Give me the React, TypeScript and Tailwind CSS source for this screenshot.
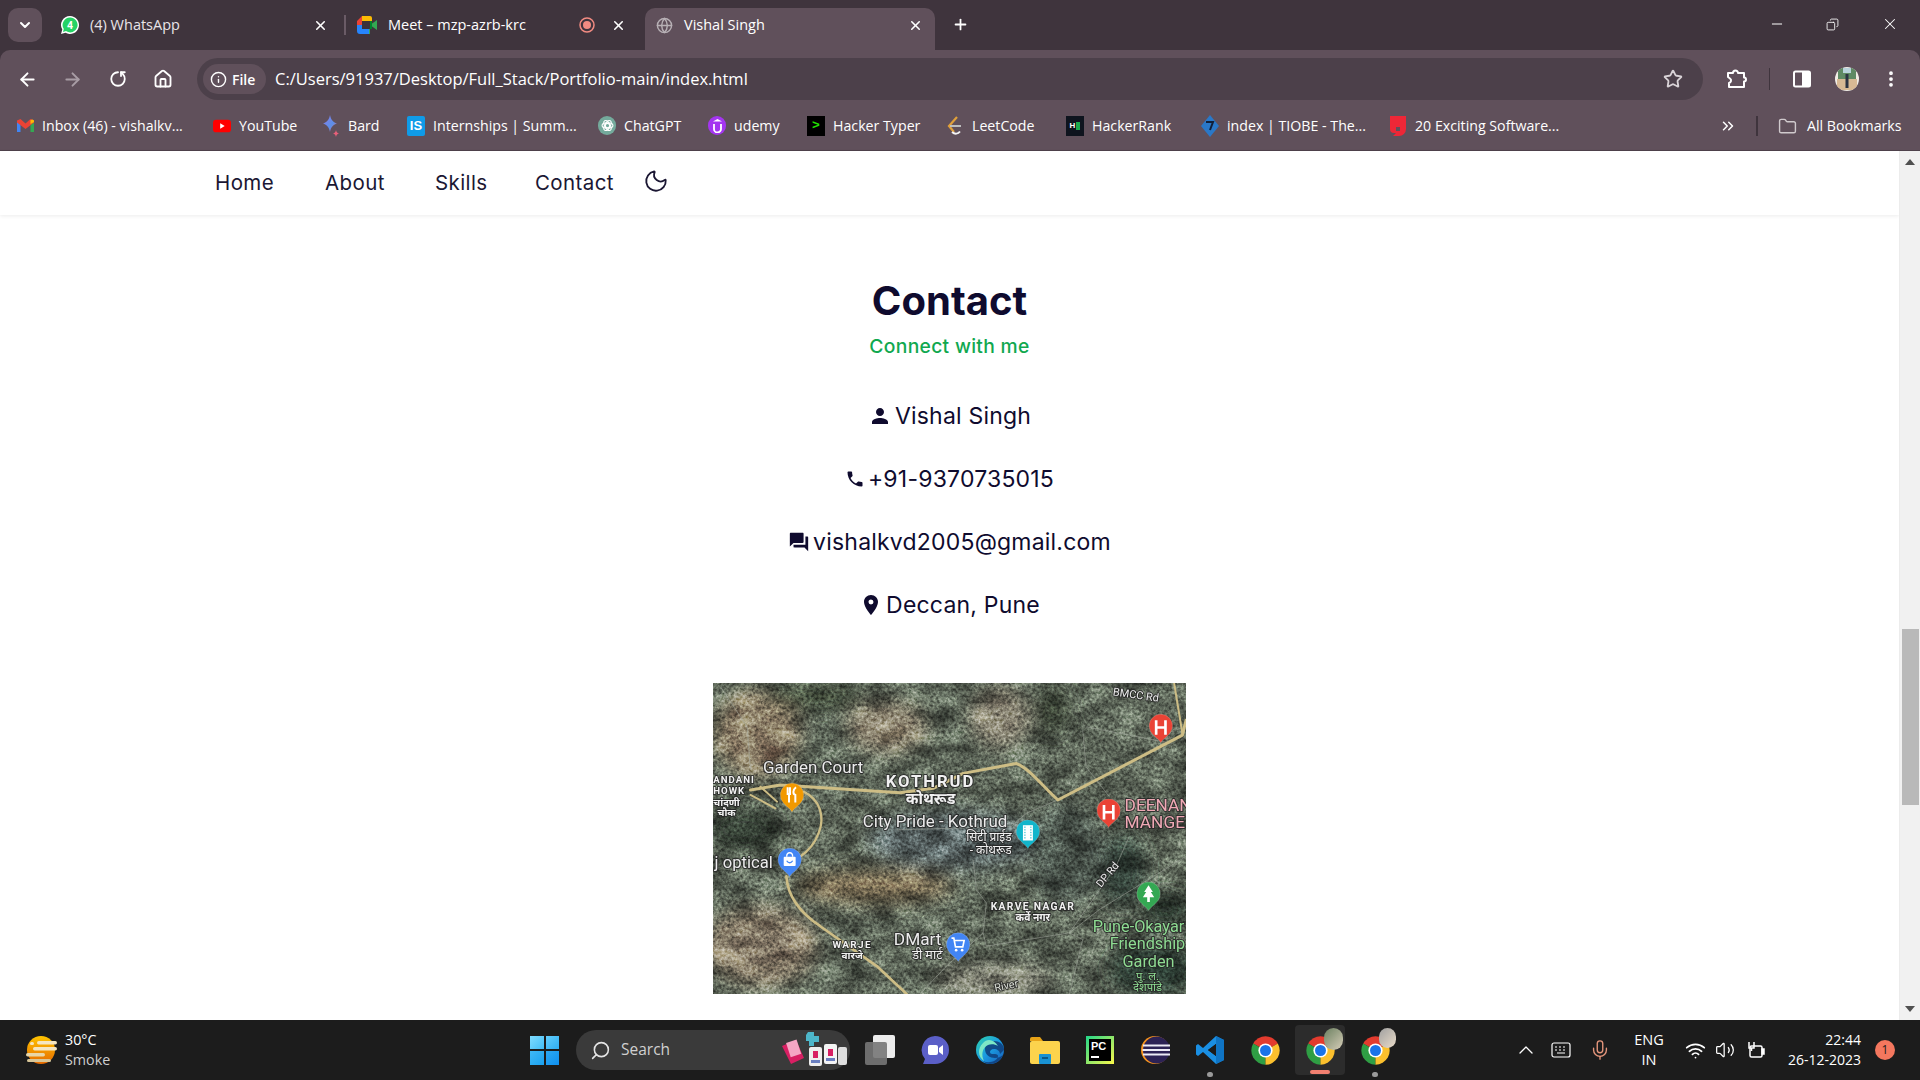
import React from "react";
import { ArrowLeft, ArrowRight, RotateCw, House, Star, EllipsisVertical, ChevronDown, X, Plus, Minus, Info, Moon, Search, Mic, ChevronUp, Wifi, Volume2, Folder, ChevronsRight, Globe, Copy } from "lucide-react";
import { MdPerson, MdPhone, MdForum, MdLocationOn } from "react-icons/md";

const Chrome = ({ size = 30 }: { size?: number }) => (
  <svg width={size} height={size} viewBox="0 0 48 48">
    <path d="M24 24L4.95 13A22 22 0 0 1 43.05 13Z" fill="#e33b2e" />
    <path d="M24 24L4.95 13A22 22 0 0 0 24 46Z" fill="#2f9e44" />
    <path d="M24 24L24 46A22 22 0 0 0 43.05 13Z" fill="#fbc02d" />
    <circle cx="24" cy="24" r="11" fill="#fff" />
    <circle cx="24" cy="24" r="8.5" fill="#1a73e8" />
  </svg>
);

const WhatsApp = () => (
  <svg width="20" height="20" viewBox="0 0 20 20">
    <path d="M10 1a9 9 0 0 0-7.7 13.6L1 19l4.5-1.2A9 9 0 1 0 10 1z" fill="#fff" />
    <path d="M10 2.6a7.4 7.4 0 0 0-6.2 11.4l-.8 2.9 3-.8A7.4 7.4 0 1 0 10 2.6z" fill="#25d366" />
    <text x="10" y="13.8" textAnchor="middle" fontSize="10.5" fontWeight="700" fill="#fff" fontFamily="Roboto, sans-serif">4</text>
  </svg>
);

const MeetIcon = () => (
  <svg width="20" height="18" viewBox="0 0 20 18">
    <path d="M0 5l5-5h8v5H5v4H0z" fill="#ea4335" />
    <path d="M0 9h5v4h8v5H3a3 3 0 0 1-3-3z" fill="#2684fc" />
    <path d="M5 0h8a2 2 0 0 1 2 2v4l-2 3V5H5z" fill="#fbbc04" />
    <path d="M13 9l7-5v10l-7-5v9h-1V9z" fill="#34a853" />
    <rect x="5" y="5" width="8" height="8" fill="#3b3039" />
    <path d="M13 5h2v8h-2z" fill="#00832d" />
  </svg>
);

const Gmail = () => (
  <svg width="17" height="14" viewBox="0 0 17 14">
    <path d="M0 2v11h3.5V5z" fill="#4285f4" />
    <path d="M17 2v11h-3.5V5z" fill="#34a853" />
    <path d="M0 1.5L3.5 0l5 4.5L13.5 0 17 1.5v2L8.5 10 0 3.5z" fill="#ea4335" />
    <path d="M13.5 1v4L17 3V1.500L15.500 .5z" fill="#fbbc04" />
  </svg>
);

const Youtube = () => (
  <svg width="20" height="14" viewBox="0 0 20 14">
    <rect width="20" height="14" rx="3.500" fill="#f00" />
    <path d="M8 4l5 3-5 3z" fill="#fff" />
  </svg>
);

const Bard = () => (
  <svg width="18" height="22" viewBox="0 0 18 22">
    <defs>
      <linearGradient id="bd" x1="0" y1="0" x2="1" y2="1">
        <stop offset="0" stopColor="#8f7be8" />
        <stop offset="0.6" stopColor="#5b8fe8" />
        <stop offset="1" stopColor="#e8607a" />
      </linearGradient>
    </defs>
    <path d="M8 0c1 5 3 7 7 8.500-4 1.500-6 3.500-7 8.500-1-5-3-7-7-8.500C5 7 7 5 8 0z" fill="url(#bd)" />
    <path d="M14 15c.4 2 1 2.800 3 3.500-2 .7-2.600 1.500-3 3.500-.4-2-1-2.800-3-3.500 2-.7 2.600-1.500 3-3.500z" fill="#e8607a" />
  </svg>
);

const IS = () => (
  <div className="w-[18px] h-[20px] rounded-[2px] bg-[#0f9be8] flex items-center justify-center text-white text-[13px] font-bold leading-none font-['Liberation_Sans',sans-serif]">IS</div>
);

const GPT = () => (
  <div className="w-[19px] h-[19px] rounded-full bg-[#74aa9c] flex items-center justify-center">
    <svg width="13" height="13" viewBox="0 0 24 24" fill="none" stroke="#fff" strokeWidth="2">
      <circle cx="12" cy="12" r="4" />
      <ellipse cx="12" cy="12" rx="10" ry="5" transform="rotate(60 12 12)" />
      <ellipse cx="12" cy="12" rx="10" ry="5" transform="rotate(-60 12 12)" />
      <ellipse cx="12" cy="12" rx="10" ry="5" />
    </svg>
  </div>
);

const Udemy = () => (
  <div className="w-[19px] h-[19px] rounded-full bg-[#a435f0] flex items-center justify-center">
    <svg width="11" height="14" viewBox="0 0 11 14" fill="none" stroke="#fff" strokeWidth="1.800">
      <path d="M2 5v5a3.500 3.500 0 0 0 7 0V5" />
      <path d="M5.500 0L10 2.500H1z" fill="#fff" stroke="none" />
    </svg>
  </div>
);

const HackerTyper = () => (
  <div className="w-[18px] h-[20px] bg-black flex items-center justify-center text-[#22e000] text-[13px] font-bold leading-none font-['Liberation_Mono',monospace]">&gt;</div>
);

const Leet = () => (
  <svg width="18" height="20" viewBox="0 0 18 20" fill="none">
    <path d="M11 1L3 10l5 6" stroke="#e0a03a" strokeWidth="2.200" />
    <path d="M4 10h11" stroke="#bdbdbd" strokeWidth="2" />
    <path d="M6 16c3 2.500 6 2 8-.5" stroke="#f4f4f4" strokeWidth="2" />
  </svg>
);

const HackerRank = () => (
  <div className="w-[20px] h-[20px] bg-[#0e141e] flex items-center justify-center gap-px">
    <span className="text-white text-[8px] font-bold leading-none font-['Liberation_Sans',sans-serif]">H</span>
    <span className="w-[4px] h-[8px] bg-[#1ba94c]" />
  </div>
);

const Tiobe = () => (
  <svg width="18" height="22" viewBox="0 0 18 22">
    <path d="M9 0l9 11-9 11-9-11z" fill="#2a78c8" />
    <path d="M5 7h7l-3 8" stroke="#10203a" strokeWidth="2" fill="none" />
  </svg>
);

const Exciting = () => (
  <svg width="16" height="20" viewBox="0 0 16 20">
    <path d="M0 0h16v13a7 7 0 0 1-7 7H3l3-3h-2a4 4 0 0 1-4-4z" fill="#ee2737" />
    <path d="M6 11h4v4H6z" fill="#60505b" />
  </svg>
);

const bookmarks = [
  { icon: <Gmail />, label: "Inbox (46) - vishalkv...", box: "w-[197px]", text: "w-[146px]" },
  { icon: <Youtube />, label: "YouTube", box: "w-[109px]", text: "w-[62px]" },
  { icon: <Bard />, label: "Bard", box: "w-[85px]", text: "w-[36px]" },
  { icon: <IS />, label: "Internships | Summ...", box: "w-[191px]", text: "w-[144px]" },
  { icon: <GPT />, label: "ChatGPT", box: "w-[110px]", text: "w-[72px]" },
  { icon: <Udemy />, label: "udemy", box: "w-[99px]", text: "w-[50px]" },
  { icon: <HackerTyper />, label: "Hacker Typer", box: "w-[139px]", text: "w-[92px]" },
  { icon: <Leet />, label: "LeetCode", box: "w-[120px]", text: "w-[70px]" },
  { icon: <HackerRank />, label: "HackerRank", box: "w-[135px]", text: "w-[90px]" },
  { icon: <Tiobe />, label: "index | TIOBE - The...", box: "w-[188px]", text: "w-[142px]" },
  { icon: <Exciting />, label: "20 Exciting Software...", box: "w-[180px]", text: "w-[150px]" },
];

const TabStrip = () => (
  <div className="h-[50px] bg-[#3f343d] flex items-end shrink-0 text-[14.500px] text-white">
    <div className="w-[34px] h-[34px] ml-[8px] mb-[8px] rounded-[10px] bg-[#60505b] flex items-center justify-center">
      <ChevronDown size={16} strokeWidth={3} />
    </div>
    <div className="w-[284px] h-[42px] ml-[18px] pb-[8px] flex items-center">
      <WhatsApp />
      <span className="ml-[10px] text-[#e9e4e8]">(4) WhatsApp</span>
      <X size={15} strokeWidth={2.500} className="ml-auto mr-[16px]" />
    </div>
    <div className="w-[2px] h-[20px] bg-[#6a5b66] mb-[15px]" />
    <div className="w-[299px] h-[42px] pl-[11px] pb-[8px] flex items-center">
      <MeetIcon />
      <span className="ml-[11px]">Meet – mzp-azrb-krc</span>
      <svg width="16" height="16" viewBox="0 0 16 16" className="ml-auto mr-[16px]">
        <circle cx="8" cy="8" r="7" fill="none" stroke="#f28b82" strokeWidth="1.500" />
        <circle cx="8" cy="8" r="4" fill="#f28b82" />
      </svg>
      <X size={15} strokeWidth={2.500} className="mr-[19px]" />
    </div>
    <div className="w-[290px] h-[42px] rounded-t-[10px] bg-[#60505b] pl-[11px] pb-[8px] flex items-center">
      <Globe size={17} className="text-[#b7b0b5]" />
      <span className="ml-[11px]">Vishal Singh</span>
      <X size={15} strokeWidth={2.500} className="ml-auto mr-[12px]" />
    </div>
    <div className="ml-[17px] mb-[17px]">
      <Plus size={17} strokeWidth={2.500} />
    </div>
    <div className="ml-auto mb-[17px] flex items-center">
      <Minus size={16} strokeWidth={1.500} className="mr-[41px]" />
      <Copy size={13} strokeWidth={1.600} className="mr-[42px] -scale-x-100" />
      <X size={18} strokeWidth={1.400} className="mr-[21px]" />
    </div>
  </div>
);

const Toolbar = () => (
  <div className="h-[58px] bg-[#60505b] rounded-tl-[10px] rounded-tr-[10px] shrink-0 flex items-center text-white">
    <ArrowLeft size={21} strokeWidth={2.200} className="ml-[17px]" />
    <ArrowRight size={21} strokeWidth={2.200} className="ml-[24px] text-[#a89da5]" />
    <RotateCw size={18} strokeWidth={2.400} className="ml-[26px] -scale-x-100 rotate-90" />
    <House size={20} strokeWidth={2.200} className="ml-[26px]" />
    <div className="ml-[24px] w-[1506px] h-[42px] rounded-full bg-[#4c404a] flex items-center">
      <div className="ml-[6px] w-[63px] h-[30px] rounded-full bg-[#60505b] flex items-center pl-[7px] gap-[5px] text-[14px] font-semibold">
        <Info size={17} strokeWidth={2} />
        <span>File</span>
      </div>
      <span className="ml-[9px] text-[16.500px]">C:/Users/91937/Desktop/Full_Stack/Portfolio-main/index.html</span>
      <Star size={20} strokeWidth={2.200} className="ml-auto mr-[20px] text-[#d9d3d7]" />
    </div>
    <svg width="22" height="22" viewBox="0 0 22 22" className="ml-[22px]" fill="none" stroke="#fff" strokeWidth="2" strokeLinejoin="round">
      <path d="M3 5h5a2.500 2.500 0 0 1 5 0h6v4.500a2 2 0 0 1 0 4V19H4v-4a2.500 2.500 0 0 0 1-4.500L3 9z" />
    </svg>
    <div className="ml-[22px] w-px h-[22px] bg-[#3f343d]" />
    <svg width="18" height="18" viewBox="0 0 18 18" className="ml-[23px]">
      <rect x="1" y="1.500" width="16" height="15" rx="1.500" fill="none" stroke="#fff" strokeWidth="2" />
      <rect x="9" y="1.500" width="8" height="15" fill="#fff" />
    </svg>
    <svg width="24" height="24" viewBox="0 0 24 24" className="ml-[24px]">
      <defs>
        <clipPath id="av"><circle cx="12" cy="12" r="12" /></clipPath>
      </defs>
      <g clipPath="url(#av)">
        <rect width="24" height="24" fill="#f1ede6" />
        <rect x="3" y="1" width="18" height="11" fill="#5f8a64" />
        <rect x="8" y="1" width="8" height="5" fill="#b9d3dc" />
        <rect x="2" y="12" width="20" height="11" fill="#d7b994" />
        <rect x="10.500" y="7" width="3" height="14" fill="#2b3342" />
      </g>
    </svg>
    <EllipsisVertical size={20} strokeWidth={2.500} className="ml-[22px]" />
  </div>
);

const Bookmarks = () => (
  <div className="h-[43px] bg-[#60505b] border-b border-[#4f424c] shrink-0 flex items-center pb-[6px] text-[14.200px] text-white pl-[16px]">
    {bookmarks.map((b) => (
      <div key={b.label} className={`${b.box} flex items-center gap-[8px] shrink-0`}>
        <span className="w-[18px] flex justify-center shrink-0">{b.icon}</span>
        <span className={`${b.text} whitespace-nowrap`}>{b.label}</span>
      </div>
    ))}
    <ChevronsRight size={18} strokeWidth={2} className="ml-[150px]" />
    <div className="ml-[19px] w-[2px] h-[20px] bg-[#3f343d]" />
    <Folder size={19} strokeWidth={1.800} className="ml-[20px] text-[#d0cacd]" />
    <span className="ml-[10px] whitespace-nowrap">All Bookmarks</span>
  </div>
);

const MapPin = ({ x, y, fill, children }: { x: number; y: number; fill: string; children?: React.ReactNode }) => (
  <g transform={`translate(${x} ${y})`}>
    <path d="M0 46C-6 32-35 22-35 -5A35 35 0 0 1 35 -5C35 22 6 32 0 46Z" fill={fill} stroke="#fff" strokeOpacity="0.25" strokeWidth="2" />
    {children}
  </g>
);

const labelStyle = { paintOrder: "stroke" as const, strokeLinejoin: "round" as const };

const Label = ({ x, y, size, children, fill = "#f1f1f1", anchor = "start", spacing = 0, weight = 400 }: { x: number; y: number; size: number; children: React.ReactNode; fill?: string; anchor?: "start" | "middle" | "end"; spacing?: number; weight?: number }) => (
  <text x={x} y={y} fontSize={size} textAnchor={anchor} fill={fill} stroke="#262626" strokeOpacity="0.85" strokeWidth="6" letterSpacing={spacing} fontWeight={weight} style={labelStyle}>
    {children}
  </text>
);

const SatMap = () => (
  <svg width="475" height="311" viewBox="37 38 1424 936" className="block" fontFamily="Roboto, 'Noto Sans', sans-serif">
    <defs>
      <clipPath id="mapclip"><rect x="37" y="38" width="1424" height="936" /></clipPath>
      <filter id="blur30" x="-50%" y="-50%" width="200%" height="200%"><feGaussianBlur stdDeviation="26" /></filter>
      <filter id="fine" x="0" y="0" width="100%" height="100%" colorInterpolationFilters="sRGB">
        <feTurbulence type="fractalNoise" baseFrequency="0.11" numOctaves="3" seed="7" />
        <feColorMatrix type="matrix" values="1.600 0 0 0 -0.300  1.600 0 0 0 -0.300  1.600 0 0 0 -0.300  0 0 0 0 1" />
      </filter>
      <filter id="coarse" x="0" y="0" width="100%" height="100%" colorInterpolationFilters="sRGB">
        <feTurbulence type="fractalNoise" baseFrequency="0.012 0.018" numOctaves="4" seed="11" />
        <feColorMatrix type="matrix" values="1.800 0 0 0 -0.400  1.800 0 0 0 -0.400  1.800 0 0 0 -0.400  0 0 0 0 1" />
      </filter>
    </defs>
    <g clipPath="url(#mapclip)">
      <rect x="37" y="38" width="1424" height="936" fill="#5c6558" />
      <g filter="url(#blur30)">
        <ellipse cx="170" cy="190" rx="130" ry="130" fill="#8c7f68" />
        <ellipse cx="560" cy="170" rx="120" ry="75" fill="#8f8672" />
        <ellipse cx="900" cy="140" rx="90" ry="90" fill="#858070" />
        <ellipse cx="520" cy="650" rx="240" ry="50" fill="#75684f" />
        <ellipse cx="180" cy="830" rx="170" ry="120" fill="#857a68" />
        <ellipse cx="880" cy="930" rx="180" ry="50" fill="#7f8072" />
        <ellipse cx="1060" cy="120" rx="50" ry="70" fill="#3f4a3a" />
        <ellipse cx="340" cy="80" rx="150" ry="35" fill="#3a4434" />
        <ellipse cx="130" cy="480" rx="110" ry="65" fill="#2d392d" />
        <ellipse cx="1270" cy="600" rx="70" ry="110" fill="#303f37" />
        <ellipse cx="1360" cy="900" rx="130" ry="80" fill="#2c3a30" />
        <ellipse cx="1400" cy="720" rx="70" ry="50" fill="#2b372d" />
        <ellipse cx="760" cy="510" rx="260" ry="90" fill="#596363" />
        <ellipse cx="1100" cy="550" rx="120" ry="150" fill="#49534b" />
      </g>
      <rect x="37" y="38" width="1424" height="936" filter="url(#coarse)" className="mix-blend-overlay" opacity="0.4" />
      <rect x="37" y="38" width="1424" height="936" filter="url(#fine)" className="mix-blend-overlay" opacity="0.45" />
      <g fill="none" stroke="#a4a8a0" strokeOpacity="0.55" strokeWidth="3">
        <path d="M1075 390L980 430 935 470 590 480" />
        <path d="M1290 500L1250 590 1110 790 1150 810 1110 974" />
        <path d="M1461 560L1200 720 1110 790 860 830 850 790" />
        <path d="M820 570L830 660 860 700 850 790 740 890 660 974" />
        <path d="M1150 180L1160 290 1230 380M1160 170L1420 220" />
        <path d="M60 50L140 170 150 300" />
      </g>
      <g fill="none" stroke="#cdbd85" strokeLinecap="round" strokeLinejoin="round">
        <path d="M150 360L240 345 600 368 700 355 790 310 950 280C990 295 1030 350 1075 390L1450 195 1461 150" strokeWidth="9" />
        <path d="M1425 38L1450 190" strokeWidth="6" />
        <path d="M310 365C360 390 375 440 355 490 340 530 315 550 300 560" strokeWidth="7" />
        <path d="M258 620C262 680 300 730 360 770L530 890 620 974" strokeWidth="8" />
        <path d="M150 375L225 415M180 350L230 395" strokeWidth="6" />
      </g>
      <Label x={188} y={308} size={51} fill="#ececec">Garden Court</Label>
      <Label x={38} y={340} size={29} spacing={3} weight={700}>ANDANI</Label>
      <Label x={38} y={372} size={29} spacing={3} weight={700}>HOWK</Label>
      <Label x={78} y={407} size={30} anchor="middle" weight={700}>चांदणी</Label>
      <Label x={78} y={438} size={30} anchor="middle" weight={700}>चौक</Label>
      <Label x={692} y={352} size={50} anchor="middle" spacing={6} weight={700}>KOTHRUD</Label>
      <Label x={692} y={403} size={46} anchor="middle" weight={700}>कोथरूड</Label>
      <Label x={488} y={470} size={51} fill="#ececec">City Pride - Kothrud</Label>
      <Label x={936} y={513} size={36} anchor="end">सिटी प्राईड</Label>
      <Label x={936} y={553} size={36} anchor="end">- कोथरूड</Label>
      <Label x={42} y={595} size={50} fill="#ececec">j optical</Label>
      <Label x={1000} y={722} size={31} anchor="middle" spacing={4} weight={700}>KARVE NAGAR</Label>
      <Label x={1000} y={755} size={31} anchor="middle" weight={700}>कर्वे नगर</Label>
      <Label x={456} y={835} size={30} anchor="middle" spacing={4} weight={700}>WARJE</Label>
      <Label x={456} y={868} size={30} anchor="middle" weight={700}>वारजे</Label>
      <Label x={725} y={826} size={52} anchor="end" fill="#ececec">DMart</Label>
      <Label x={728} y={868} size={38} anchor="end">डी मार्ट</Label>
      <Label x={1276} y={424} size={52} fill="#f0a9b5">DEENAN</Label>
      <Label x={1276} y={475} size={52} fill="#f0a9b5">MANGE</Label>
      <g transform="rotate(8 1240 70)"><Label x={1240} y={75} size={33} fill="#ececec">BMCC Rd</Label></g>
      <g transform="rotate(-50 1225 615)"><Label x={1225} y={625} size={32} anchor="middle" fill="#ececec">DP Rd</Label></g>
      <g transform="rotate(-12 920 950)"><Label x={920} y={960} size={33} anchor="middle" fill="#d8dcd4">River</Label></g>
      <Label x={1318} y={787} size={49} anchor="middle" fill="#8edb92">Pune-Okayar</Label>
      <Label x={1345} y={840} size={49} anchor="middle" fill="#8edb92">Friendship</Label>
      <Label x={1348} y={893} size={49} anchor="middle" fill="#8edb92">Garden</Label>
      <Label x={1345} y={932} size={34} anchor="middle" fill="#8edb92">पु. ल.</Label>
      <Label x={1345} y={966} size={34} anchor="middle" fill="#8edb92">देशपांडे</Label>
      <MapPin x={275} y={380} fill="#f29900">
        <path d="M-13 -28V-5M-6 -28V-5M-13 -8H-6M-9 -8V18M12 -28C2 -20 2 -8 10 -5V18" stroke="#fff" strokeWidth="6" fill="none" />
      </MapPin>
      <MapPin x={1385} y={172} fill="#ea4335">
        <path d="M-14 -22V22M14 -22V22M-14 0H14" stroke="#fff" strokeWidth="8" fill="none" />
      </MapPin>
      <MapPin x={1228} y={427} fill="#ea4335">
        <path d="M-14 -22V22M14 -22V22M-14 0H14" stroke="#fff" strokeWidth="8" fill="none" />
      </MapPin>
      <MapPin x={985} y={490} fill="#12b5cb">
        <rect x="-15" y="-24" width="30" height="46" fill="#fff" />
        <path d="M-9 -20v38M9 -20v38" stroke="#12b5cb" strokeWidth="3" strokeDasharray="4 4" />
      </MapPin>
      <MapPin x={268} y={575} fill="#4285f4">
        <rect x="-18" y="-14" width="36" height="28" rx="3" fill="#fff" />
        <path d="M-9 -14C-9 -30 9 -30 9 -14" stroke="#fff" strokeWidth="4" fill="none" />
        <path d="M-9 -2C-4 6 4 6 9 -2" stroke="#4285f4" strokeWidth="4" fill="none" />
      </MapPin>
      <MapPin x={775} y={830} fill="#4285f4">
        <path d="M-20 -24h7l5 26h22l4-19H-10" stroke="#fff" strokeWidth="5" fill="none" />
        <circle cx="-6" cy="12" r="4" fill="#fff" />
        <circle cx="12" cy="12" r="4" fill="#fff" />
      </MapPin>
      <MapPin x={1348} y={677} fill="#34a853">
        <path d="M0 -30L13 -10H7L17 6H4V20H-4V6H-17L-7 -10H-13Z" fill="#fff" />
      </MapPin>
    </g>
  </svg>
);

const rows = [
  { icon: <MdPerson size={24} />, text: "Vishal Singh", mt: "mt-[0px]" },
  { icon: <MdPhone size={20} />, text: "+91-9370735015", mt: "mt-[27px]" },
  { icon: <MdForum size={22} />, text: "vishalkvd2005@gmail.com", mt: "mt-[27px]" },
  { icon: <MdLocationOn size={24} />, text: "Deccan, Pune", mt: "mt-[27px]" },
];

const Page = () => (
  <div className="flex-1 min-h-0 flex bg-white font-['Inter',sans-serif] text-[#0f0b2e]">
    <div className="flex-1 min-w-0 flex flex-col">
      <nav className="h-[64px] shrink-0 flex items-center pl-[215px] text-[20.500px] text-[#1b1733] tracking-[0.4px] shadow-[0_1px_4px_rgba(0,0,0,0.08)]">
        <span className="w-[110px]">Home</span>
        <span className="w-[110px]">About</span>
        <span className="w-[100px]">Skills</span>
        <span className="w-[108px]">Contact</span>
        <Moon size={26} strokeWidth={1.700} className="-mt-[4px] -rotate-[8deg]" />
      </nav>
      <main className="flex-1 min-h-0 flex flex-col items-center overflow-hidden">
        <h1 className="mt-[60px] text-[40px] leading-[52px] font-bold">Contact</h1>
        <p className="mt-[5px] text-[19.300px] leading-[28px] font-medium text-[#10a84f] tracking-[0.3px]">Connect with me</p>
        <div className="mt-[38px] flex flex-col items-center text-[23px] leading-[36px] tracking-[0.2px]">
          {rows.map((r) => (
            <div key={r.text} className={`${r.mt} flex items-center gap-[3px]`}>
              {r.icon}
              <span>{r.text}</span>
            </div>
          ))}
        </div>
        <div className="mt-[60px] shrink-0"><SatMap /></div>
      </main>
    </div>
    <div className="w-[21px] bg-[#f1f1f1] border-l border-[#ececec] flex flex-col items-center shrink-0">
      <svg width="10" height="6" viewBox="0 0 10 6" className="mt-[8px]"><path d="M5 0L10 6H0z" fill="#505050" /></svg>
      <div className="mt-[464px] w-[17px] h-[176px] bg-[#b9b9b9]" />
      <svg width="10" height="6" viewBox="0 0 10 6" className="mt-auto mb-[8px]"><path d="M5 6L10 0H0z" fill="#505050" /></svg>
    </div>
  </div>
);

const WinLogo = () => (
  <div className="grid grid-cols-2 gap-[2px] w-[29px] h-[29px]">
    <span className="bg-[linear-gradient(135deg,#7fdcff,#42bdf5)]" />
    <span className="bg-[linear-gradient(135deg,#62cdfb,#2eaef2)]" />
    <span className="bg-[linear-gradient(135deg,#3fb9f6,#1ba1ef)]" />
    <span className="bg-[linear-gradient(135deg,#2ba9f3,#0f8fee)]" />
  </div>
);

const Edge = () => (
  <svg width="30" height="30" viewBox="0 0 30 30">
    <defs>
      <linearGradient id="eg" x1="0" y1="0" x2="1" y2="1">
        <stop offset="0" stopColor="#2fd2a8" />
        <stop offset="0.5" stopColor="#1b9de2" />
        <stop offset="1" stopColor="#1558b8" />
      </linearGradient>
    </defs>
    <circle cx="15" cy="15" r="14" fill="url(#eg)" />
    <path d="M29 15c0-6-5-9-10-9-6 0-9 4-9 8 0 6 5 9 10 9 3 0 6-1 8-3-2 5-7 9-13 9-3 0-5-1-7-3 6 3 15 0 15-5 0-1-1-2-3-2h-3c-1 0-2-1-2-2s1-3 4-3 6 2 6 5" fill="#0f3d7a" fillOpacity="0.85" />
    <path d="M8 8c-3 3-4 6-4 9 0 4 2 7 5 9-3-6-2-13 4-16 3-1.500 7-1 10 1C19 4 12 3 8 8z" fill="#7ee8c7" />
  </svg>
);

const Files = () => (
  <svg width="30" height="28" viewBox="0 0 30 28">
    <path d="M0 3a2 2 0 0 1 2-2h8l3 4h-13z" fill="#e8a317" />
    <rect x="0" y="5" width="30" height="23" rx="2" fill="#fcd34d" />
    <rect x="9" y="18" width="12" height="10" rx="1" fill="#1992d4" />
    <rect x="12" y="21" width="6" height="2" fill="#0c5a8a" />
  </svg>
);

const PyCharm = () => (
  <div className="relative w-[28px] h-[28px] bg-[linear-gradient(135deg,#21d789,#fcf84a)] p-[3px]">
    <div className="w-full h-full bg-black text-white text-[11px] font-bold leading-[11px] pl-[2px] pt-[2px] font-['Liberation_Sans',sans-serif]">
      PC
      <div className="w-[8px] h-[2px] bg-white mt-[4px]" />
    </div>
  </div>
);

const Eclipse = () => (
  <svg width="30" height="30" viewBox="0 0 30 30">
    <circle cx="15" cy="15" r="14" fill="#f7941e" />
    <circle cx="16.500" cy="15" r="13.500" fill="#2c2255" />
    <path d="M3 10.500h27M2.500 15h27.500M3 19.500h27" stroke="#ecebf5" strokeWidth="2.200" />
  </svg>
);

const VSCode = () => (
  <svg width="30" height="30" viewBox="0 0 30 30">
    <path d="M21 1L29 5V25L21 29 8 17 3 21 1 19.500V10.500L3 9 8 13ZM21 9L13 15 21 21Z" fill="#1a8fe3" />
    <path d="M21 1L29 5V25L21 29Z" fill="#0f74c4" />
    <path d="M21 9L13 15 21 21Z" fill="#1c1c1c" />
  </svg>
);

const Weather = () => (
  <svg width="34" height="30" viewBox="0 0 34 30">
    <defs>
      <linearGradient id="sun" x1="0" y1="0" x2="0" y2="1">
        <stop offset="0" stopColor="#ffc400" />
        <stop offset="1" stopColor="#e66a00" />
      </linearGradient>
    </defs>
    <circle cx="17" cy="15" r="14" fill="url(#sun)" />
    <rect x="6" y="7" width="4" height="3" rx="1.500" fill="#f5e6c0" />
    <rect x="13" y="6" width="20" height="3.500" rx="1.700" fill="#f5e6c0" />
    <rect x="9" y="12" width="24" height="3.500" rx="1.700" fill="#f5e6c0" />
    <rect x="2" y="18" width="19" height="3.500" rx="1.700" fill="#e8d6a8" />
    <rect x="3" y="24" width="24" height="3" rx="1.500" fill="#d8c698" />
  </svg>
);

const SearchArt = () => (
  <svg width="66" height="36" viewBox="0 0 66 36">
    <path d="M0 14l14-6 8 18-13 6z" fill="#d81f63" />
    <rect x="6" y="9" width="11" height="15" transform="rotate(-18 11 16)" fill="#f5a6c4" />
    <path d="M26 0h6v4h5v6h-5v4h-5v-5h-3V3z" fill="#4db6c9" />
    <rect x="27" y="15" width="13" height="19" rx="2" fill="#eee" />
    <rect x="42" y="12" width="13" height="20" rx="2" fill="#f4f4f4" />
    <rect x="56" y="15" width="9" height="18" rx="2" fill="#ddd" />
    <rect x="31" y="19" width="5" height="7" fill="#d81f63" />
    <rect x="46" y="17" width="5" height="7" fill="#d81f63" />
    <rect x="29" y="28" width="9" height="3" fill="#6a7fc0" />
    <rect x="44" y="26" width="9" height="3" fill="#6a7fc0" />
  </svg>
);

const TaskButton = ({ className, children, dot }: { className?: string; children: React.ReactNode; dot?: boolean }) => (
  <div className={`relative w-[50px] h-[50px] flex items-center justify-center shrink-0 ${className ?? ""}`}>
    {children}
    {dot && <span className="absolute bottom-[-2px] left-1/2 -translate-x-1/2 w-[6px] h-[5px] rounded-full bg-[#9a9a9a]" />}
  </div>
);

const Taskbar = () => (
  <div className="h-[60px] bg-[#1c1c1c] shrink-0 flex items-center text-white font-['Open_Sans',sans-serif]">
    <div className="w-[530px] flex items-center shrink-0 pl-[24px]">
      <Weather />
      <div className="ml-[7px] text-[14.300px] leading-[20px]">
        <div>30°C</div>
        <div className="text-[#cfcfcf]">Smoke</div>
      </div>
    </div>
    <WinLogo />
    <div className="ml-[17px] w-[274px] h-[40px] rounded-full bg-[#3a3a3a] flex items-center pl-[14px]">
      <Search size={21} strokeWidth={1.800} className="-scale-x-100 text-[#e4e4e4]" />
      <span className="ml-[10px] text-[15.500px] text-[#d0d0d0]">Search</span>
      <span className="ml-auto mr-[2px]"><SearchArt /></span>
    </div>
    <TaskButton className="ml-[5px]">
      <div className="relative w-[30px] h-[30px]">
        <span className="absolute right-0 top-0 w-[22px] h-[23px] rounded-[2px] bg-[#ececec]" />
        <span className="absolute left-0 bottom-0 w-[22px] h-[23px] rounded-[2px] bg-[#777]/90" />
      </div>
    </TaskButton>
    <TaskButton className="ml-[5px]">
      <svg width="30" height="30" viewBox="0 0 30 30">
        <path d="M15 1a14 14 0 0 1 0 28H3l2-5A14 14 0 0 1 15 1z" fill="#5b5fc7" />
        <rect x="8" y="10" width="10" height="10" rx="2" fill="#fff" />
        <path d="M19 13l4-3v10l-4-3z" fill="#fff" />
      </svg>
    </TaskButton>
    <TaskButton className="ml-[5px]"><Edge /></TaskButton>
    <TaskButton className="ml-[5px]"><Files /></TaskButton>
    <TaskButton className="ml-[5px]"><PyCharm /></TaskButton>
    <TaskButton className="ml-[5px]"><Eclipse /></TaskButton>
    <TaskButton className="ml-[5px]" dot><VSCode /></TaskButton>
    <TaskButton className="ml-[5px]"><Chrome size={31} /></TaskButton>
    <div className="relative ml-[5px] w-[50px] h-[50px] rounded-[4px] bg-[#2c2c2c] flex items-center justify-center shrink-0">
      <Chrome size={31} />
      <span className="absolute right-[2px] top-[3px] w-[19px] h-[22px] rounded-full bg-[linear-gradient(135deg,#6b8060,#d6cdb8)]" />
      <span className="absolute bottom-[1px] left-1/2 -translate-x-1/2 w-[20px] h-[4px] rounded-full bg-[#f28070]" />
    </div>
    <TaskButton className="ml-[5px]" dot>
      <Chrome size={31} />
      <span className="absolute right-[4px] top-[3px] w-[17px] h-[20px] rounded-full bg-[linear-gradient(135deg,#a0a0a0,#eadcc9)]" />
    </TaskButton>
    <ChevronUp size={24} strokeWidth={1.300} className="ml-[114px]" />
    <svg width="20" height="16" viewBox="0 0 20 16" className="ml-[13px]" fill="none" stroke="#fff" strokeWidth="1.200">
      <rect x="1" y="1" width="18" height="14" rx="2" />
      <path d="M4 5h2M8 5h2M12 5h2M4 8h2M8 8h2M12 8h2M6 11h8" />
    </svg>
    <Mic size={22} strokeWidth={1.500} className="ml-[18px] text-[#e5967c]" />
    <div className="ml-[18px] w-[40px] text-center text-[14.500px] leading-[20px]">
      <div>ENG</div>
      <div>IN</div>
    </div>
    <Wifi size={21} strokeWidth={2} className="ml-[16px]" />
    <Volume2 size={20} strokeWidth={1.500} className="ml-[9px]" />
    <svg width="18" height="18" viewBox="0 0 18 18" className="ml-[12px]" fill="none" stroke="#fff" strokeWidth="1.500">
      <rect x="3" y="5" width="12" height="11" rx="1.500" />
      <rect x="15" y="8" width="2" height="5" fill="#fff" />
      <path d="M2 1v6h5V1M4.500 7v3" />
    </svg>
    <div className="ml-[15px] w-[81px] text-right text-[14px] leading-[20px] whitespace-nowrap">
      <div>22:44</div>
      <div>26-12-2023</div>
    </div>
    <div className="ml-[14px] w-[20px] h-[20px] rounded-full bg-[#f4775e] text-[#1c1c1c] text-[12px] flex items-center justify-center">1</div>
  </div>
);

export default function App() {
  return (
    <div className="w-[1920px] h-[1080px] flex flex-col overflow-hidden bg-[#3f343d] font-['Open_Sans',sans-serif]">
      <TabStrip />
      <Toolbar />
      <Bookmarks />
      <Page />
      <Taskbar />
    </div>
  );
}
